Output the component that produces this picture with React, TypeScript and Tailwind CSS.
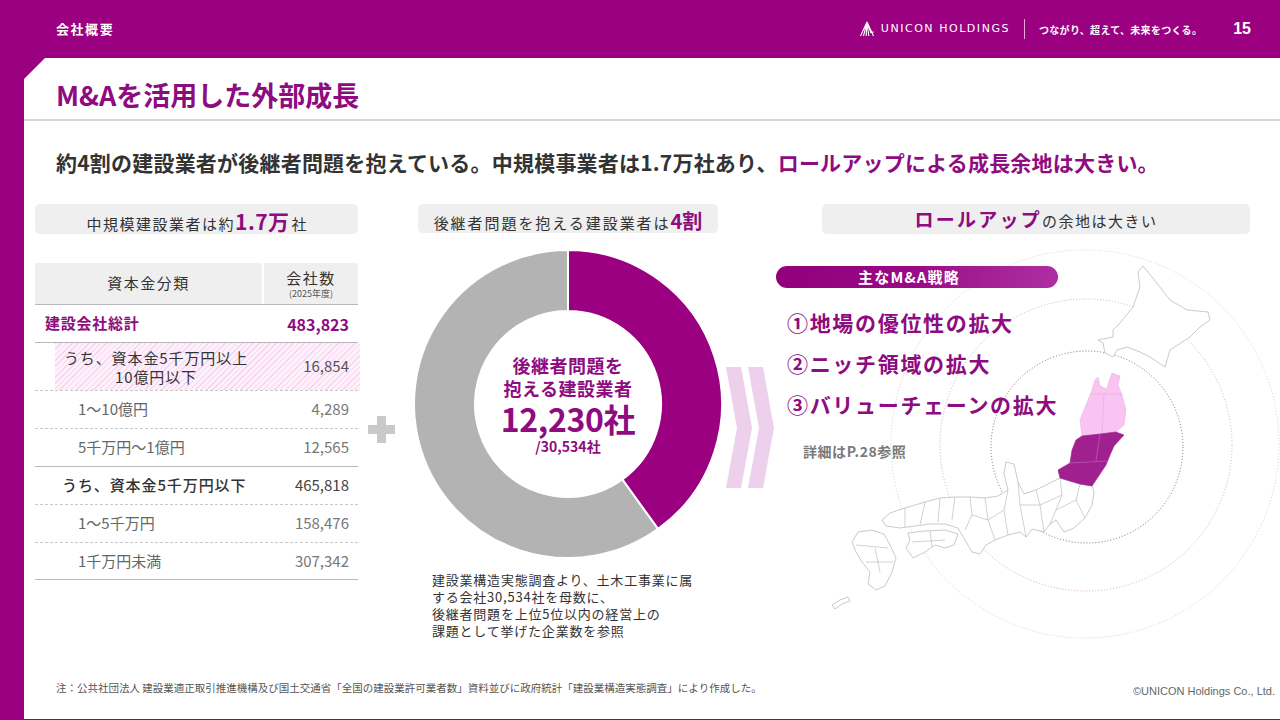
import React from "react"

// annular sector, angles in turns measured clockwise from 12 o'clock
function sector(cx: number, cy: number, r1: number, r2: number, t0: number, t1: number) {
  const a0 = t0 * Math.PI * 2
  const a1 = t1 * Math.PI * 2
  const pt = (r: number, a: number) => `${cx + r * Math.sin(a)} ${cy - r * Math.cos(a)}`
  const large = t1 - t0 > 0.5 ? 1 : 0
  return `M${pt(r2, a0)} A${r2} ${r2} 0 ${large} 1 ${pt(r2, a1)} L${pt(r1, a1)} A${r1} ${r1} 0 ${large} 0 ${pt(r1, a0)}Z`
}

function Logo() {
  return (
    <svg width="16" height="16" viewBox="0 0 16 16" fill="none" stroke="#fff" strokeWidth="1.1">
      <path d="M8 1 L1.5 15 M8 1 L4.5 15 M8 1 L7.2 15 M8 1 L9.8 15 M8 1 L12 12 M8 1 L14.5 15" />
      <path d="M11 11.5 L14.8 11" />
    </svg>
  )
}

function Donut() {
  const share = 12230 / 30534
  return (
    <div className="relative h-[310px] w-[310px]">
      <svg width="310" height="310" viewBox="0 0 310 310">
        <path d={sector(155, 155, 93, 154, share, 1)} fill="#b3b3b3" stroke="#fff" strokeWidth="2" />
        <path d={sector(155, 155, 93, 154, 0, share)} fill="#9a0080" stroke="#fff" strokeWidth="2" />
      </svg>
      <div className="absolute inset-0 flex flex-col items-center justify-center pt-[2px] font-bold text-[#8e0b80]">
        <div className="text-[18px] leading-[23px] tracking-[0.03em]">後継者問題を</div>
        <div className="text-[18px] leading-[23px] tracking-[0.03em]">抱える建設業者</div>
        <div className="text-[32px] leading-[36px] tracking-[-0.01em]">12,230社</div>
        <div className="text-[14px] leading-[21px]">/30,534社</div>
      </div>
    </div>
  )
}

function JapanMap() {
  const line = "#bdbdbd"
  return (
    <svg className="absolute left-[796px] top-[182px] z-0" width="460" height="420" viewBox="820 240 460 420" fill="none">
      <circle cx="1085" cy="444" r="194" stroke="#e9c3e6" strokeWidth="1" strokeDasharray="1 2" />
      <circle cx="1086" cy="445" r="146" stroke="#d9a3d4" strokeWidth="1" strokeDasharray="1 2" />
      <circle cx="1087" cy="447" r="96" stroke="#7d537a" strokeWidth="0.9" strokeDasharray="1 2" />

      {/* Hokkaido */}
      <path
        d="M1143 266 L1152 277 L1170 300 L1187 310 L1208 312 L1210 320 L1200 327 L1190 337 L1170 350 L1165 367 L1150 357 L1140 352 L1127 347 L1117 350 L1113 357 L1105 353 L1103 343 L1098 340 L1113 337 L1113 330 L1120 323 L1133 307 L1140 287 L1138 272 Z"
        fill="#fff"
        stroke={line}
        strokeWidth="0.8"
      />

      {/* rest of Honshu */}
      <path
        d="M1060 478 L1048 484 L1036 490 L1024 494 L1018 482 L1014 464 L1006 462 L1004 474 L1008 490 L998 496 L985 498 L970 497 L955 497 L940 498 L925 502 L905 508 L890 513 L882 520 L886 526 L900 528 L915 526 L930 524 L945 524 L958 528 L965 540 L972 552 L980 554 L986 545 L995 540 L1008 535 L1020 532 L1026 537 L1032 529 L1044 532 L1050 524 L1056 520 L1064 532 L1074 528 L1085 518 L1092 505 L1094 492 L1092 486 L1080 484 Z"
        fill="#fff"
        stroke={line}
        strokeWidth="0.8"
      />
      <path
        d="M1080 484 L1076 500 L1085 518 M1060 478 L1062 495 L1056 510 L1050 524 M1036 490 L1040 505 L1044 532 M1018 482 L1020 505 L1026 537 M1040 505 L1062 495 M1020 505 L1040 505 M1008 490 L1004 510 L1008 535 M985 498 L988 520 L995 540 M970 497 L972 515 L965 530 M955 497 L952 520 M940 498 L938 522 M925 502 L920 525 M905 508 L905 527 M988 520 L1004 510 M972 515 L988 520 M1056 510 L1076 500"
        stroke={line}
        strokeWidth="0.7"
      />

      {/* Shikoku */}
      <path d="M908 533 L925 531 L945 530 L958 534 L954 545 L945 548 L935 545 L925 552 L913 558 L906 548 L910 540 Z" fill="#fff" stroke={line} strokeWidth="0.8" />
      <path d="M930 531 L932 547 M912 542 L945 540" stroke={line} strokeWidth="0.7" />

      {/* Kyushu */}
      <path d="M858 532 L872 530 L884 534 L890 545 L896 558 L892 572 L885 586 L876 590 L868 584 L870 572 L862 562 L856 552 L852 542 Z" fill="#fff" stroke={line} strokeWidth="0.8" />
      <path d="M856 545 L888 548 M866 562 L893 562 M875 548 L880 572" stroke={line} strokeWidth="0.7" />
      <path d="M832 605 L840 600 L848 597 L850 601 L842 604 L835 609 Z" fill="#fff" stroke={line} strokeWidth="0.8" />

      {/* Tohoku north (pink) */}
      <path
        d="M1098 377 L1100 386 L1107 389 L1109 381 L1112 373 L1120 376 L1118 385 L1122 395 L1126 410 L1124 425 L1116 432 L1100 434 L1082 436 L1080 420 L1086 405 L1092 390 L1095 380 Z"
        fill="#f9c4f1"
        stroke="#e7b1e0"
        strokeWidth="0.6"
      />
      <path d="M1091 394 L1122 394 M1104 394 L1102 434" stroke="#e3a8dc" strokeWidth="0.6" />

      {/* Tohoku south (purple) */}
      <path
        d="M1082 436 L1100 434 L1116 432 L1124 435 L1114 446 L1110 455 L1106 465 L1092 486 L1080 484 L1060 478 L1058 470 L1070 463 L1072 450 L1076 440 Z"
        fill="#a0208f"
        stroke="#a0208f"
        strokeWidth="0.6"
      />
      <path d="M1100 434 L1096 461 M1070 463 L1107 461" stroke="#c46ab8" strokeWidth="0.6" />
    </svg>
  )
}

function Row({
  label,
  value,
  rowClass,
  labelClass,
  valueClass,
}: {
  label: React.ReactNode
  value: string
  rowClass: string
  labelClass: string
  valueClass: string
}) {
  return (
    <div className={`flex items-center justify-between ${rowClass}`}>
      <div className={labelClass}>{label}</div>
      <div className={`pr-[9px] ${valueClass}`}>{value}</div>
    </div>
  )
}

export default function App() {
  return (
    <div className="relative h-[720px] w-[1280px] overflow-hidden bg-[#9a0080] font-['Noto_Sans_CJK_JP','Noto_Sans',sans-serif] text-[#333]">
      <header className="flex h-[58px] items-center pl-[56px] pr-[29px] text-white">
        <span className="text-[13px] font-bold tracking-[0.12em]">会社概要</span>
        <div className="ml-auto flex items-center">
          <Logo />
          <span className="ml-[6px] font-['DejaVu_Sans',sans-serif] text-[11px] tracking-[0.14em]">UNICON HOLDINGS</span>
          <span className="mx-[14px] h-[20px] w-px bg-[#e7a6dd]" />
          <span className="text-[10px] font-bold tracking-[0.03em]">つながり、超えて、未来をつくる。</span>
          <span className="ml-[31px] font-['Liberation_Sans',sans-serif] text-[16px] font-bold">15</span>
        </div>
      </header>

      <main className="relative ml-[24px] flex h-[661px] flex-col bg-white [clip-path:polygon(21px_0,100%_0,100%_100%,0_100%,0_21px)]">
        <div className="flex h-[63px] items-center border-b-2 border-[#d6d6d6] pl-[32px] pt-[13px]">
          <h1 className="text-[27px] font-bold text-[#8e0b80]">M&amp;Aを活用した外部成長</h1>
        </div>

        <div className="flex h-[83px] items-center pl-[32px] text-[21px] font-bold tracking-[0.01em] text-[#333]">
          約4割の建設業者が後継者問題を抱えている。中規模事業者は1.7万社あり、
          <span className="text-[#8e0b80]">ロールアップによる成長余地は大きい。</span>
        </div>

        <JapanMap />

        <div className="relative z-10 flex">
          {/* left: company counts */}
          <div className="ml-[11px] w-[323px]">
            <div className="flex h-[30px] items-baseline justify-center rounded-[5px] bg-[#efefef] pt-[2px]">
              <span className="text-[15px] tracking-[0.1em]">中規模建設業者は約</span>
              <span className="text-[21px] font-bold tracking-[0.02em] text-[#8e0b80]">1.7万</span>
              <span className="ml-[2px] text-[15px]">社</span>
            </div>

            <div className="mt-[29px] text-[15px]">
              <div className="flex h-[42px] border-b border-[#b8b8b8] bg-[#efefef]">
                <div className="flex flex-1 items-center justify-center tracking-[0.1em]">資本金分類</div>
                <div className="flex w-[96px] flex-col items-center justify-center border-l-2 border-white leading-none">
                  <span className="tracking-[0.1em]">会社数</span>
                  <span className="mt-[4px] text-[9px] text-[#555]">(2025年度)</span>
                </div>
              </div>
              <Row
                label="建設会社総計"
                value="483,823"
                rowClass="h-[38px] border-b border-[#b8b8b8]"
                labelClass="pl-[10px] font-bold tracking-[0.05em] text-[#8e0b80]"
                valueClass="text-[16px] font-bold text-[#8e0b80]"
              />
              <div className="border-b border-dashed border-[#c8c8c8]">
                <Row
                  label={
                    <div className="w-[188px] text-center leading-[19px] tracking-[0.06em]">
                      うち、資本金5千万円以上
                      <br />
                      10億円以下
                    </div>
                  }
                  value="16,854"
                  rowClass="ml-[20px] mr-[-2px] h-[47px] bg-[repeating-linear-gradient(135deg,#f6d3f1_0px,#f6d3f1_1px,#fdf0fb_1px,#fdf0fb_4px)] pl-[7px]"
                  labelClass="text-[#333]"
                  valueClass="mr-[2px] text-[#555]"
                />
              </div>
              <Row
                label="1〜10億円"
                value="4,289"
                rowClass="h-[38px] border-b border-dashed border-[#c8c8c8]"
                labelClass="pl-[43px] text-[#666]"
                valueClass="text-[#777]"
              />
              <Row
                label="5千万円〜1億円"
                value="12,565"
                rowClass="h-[38px] border-b border-[#b8b8b8]"
                labelClass="pl-[43px] text-[#666]"
                valueClass="text-[#777]"
              />
              <Row
                label="うち、資本金5千万円以下"
                value="465,818"
                rowClass="h-[38px] border-b border-dashed border-[#c8c8c8]"
                labelClass="pl-[27px] font-medium tracking-[0.06em] text-[#333]"
                valueClass="text-[#444]"
              />
              <Row
                label="1〜5千万円"
                value="158,476"
                rowClass="h-[38px] border-b border-dashed border-[#c8c8c8]"
                labelClass="pl-[43px] text-[#666]"
                valueClass="text-[#777]"
              />
              <Row
                label="1千万円未満"
                value="307,342"
                rowClass="h-[37px] border-b border-[#b8b8b8]"
                labelClass="pl-[43px] text-[#666]"
                valueClass="text-[#777]"
              />
            </div>
          </div>

          {/* plus */}
          <div className="w-[55px]">
            <svg className="ml-[10px] mt-[212px]" width="27" height="27" viewBox="0 0 27 27">
              <rect x="9" y="0" width="9" height="27" fill="#c9c9c9" />
              <rect x="0" y="9" width="27" height="9" fill="#c9c9c9" />
            </svg>
          </div>

          {/* middle: donut */}
          <div className="w-[310px]">
            <div className="mx-[5px] flex h-[29px] items-baseline justify-center rounded-[5px] bg-[#efefef] pt-[2px]">
              <span className="text-[15px] tracking-[0.13em]">後継者問題を抱える建設業者は</span>
              <span className="text-[20px] font-bold text-[#8e0b80]">4割</span>
            </div>
            <div className="mt-[16px]">
              <Donut />
            </div>
            <p className="mt-[12px] pl-[19px] text-[13px] leading-[17px] tracking-[0.06em] text-[#333]">
              建設業構造実態調査より、土木工事業に属
              <br />
              する会社30,534社を母数に、
              <br />
              後継者問題を上位5位以内の経営上の
              <br />
              課題として挙げた企業数を参照
            </p>
          </div>

          {/* chevrons */}
          <div className="w-[53px]">
            <svg className="mt-[163px]" width="53" height="122" viewBox="723 367 53 122">
              <path d="M726 367 L741 367 L752 428 L741 488 L726 488 L737 428 Z" fill="#ecd0ec" />
              <path d="M748 367 L763 367 L774 428 L763 488 L748 488 L759 428 Z" fill="#ecd0ec" />
            </svg>
          </div>

          {/* right: roll-up */}
          <div className="flex-1">
            <div className="ml-[46px] flex h-[30px] w-[428px] items-baseline justify-center rounded-[5px] bg-[#efefef] pt-[1px]">
              <span className="text-[19px] font-bold tracking-[0.12em] text-[#8e0b80]">ロールアップ</span>
              <span className="text-[15px] tracking-[0.1em]">の余地は大きい</span>
            </div>
            <div className="mt-[32px] flex h-[22px] w-[282px] items-center justify-center rounded-full bg-linear-to-r from-[#92007c] via-[#9a0a86] to-[#ad2ea2] pr-[16px] text-[15px] font-bold tracking-[0.08em] text-white">
              主なM&amp;A戦略
            </div>
            <div className="ml-[11px] mt-[14px] text-[21px] font-bold tracking-[0.08em] text-[#8e0b80]">
              <div className="flex h-[41px] items-center">①地場の優位性の拡大</div>
              <div className="flex h-[41px] items-center">②ニッチ領域の拡大</div>
              <div className="flex h-[41px] items-center">③バリューチェーンの拡大</div>
            </div>
            <div className="ml-[27px] mt-[16px] text-[14px] font-bold leading-[20px] tracking-[0.04em] text-[#7a7a7a]">
              詳細はP.28参照
            </div>
          </div>
        </div>

        <footer className="mb-[11px] mt-auto flex h-[40px] items-center justify-between pl-[32px] pr-[5px]">
          <span className="text-[10.5px] text-[#555]">
            注：公共社団法人 建設業適正取引推進機構及び国土交通省「全国の建設業許可業者数」資料並びに政府統計「建設業構造実態調査」により作成した。
          </span>
          <span className="mt-[6px] font-['Liberation_Sans',sans-serif] text-[11px] text-[#666]">©UNICON Holdings Co., Ltd.</span>
        </footer>
      </main>
    </div>
  )
}
